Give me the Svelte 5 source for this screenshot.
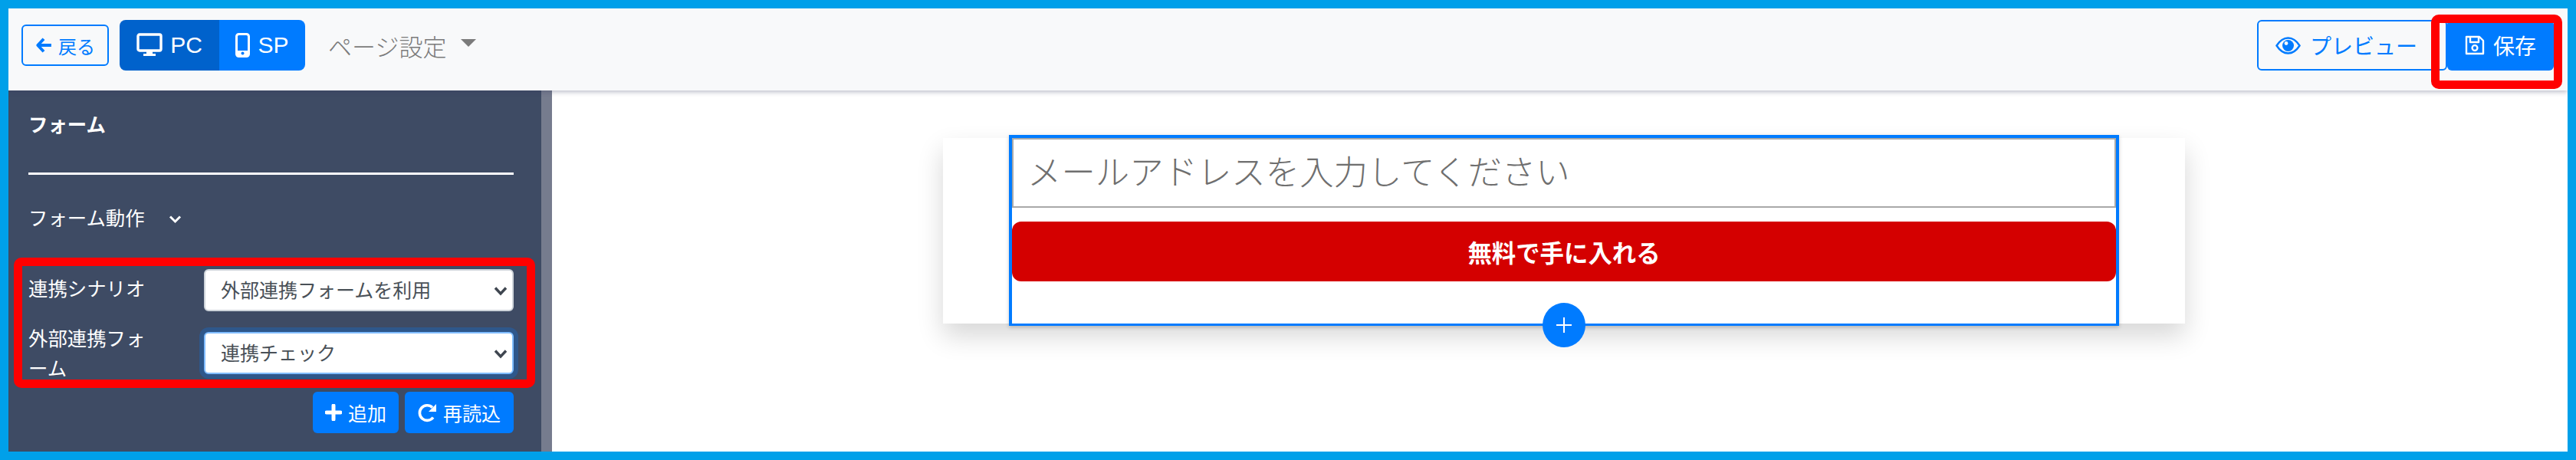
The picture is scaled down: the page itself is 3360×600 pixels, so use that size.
<script>
  let scenario = "外部連携フォームを利用";
  let linkedForm = "連携チェック";
</script>

<div class="frame">
  <header class="toolbar">
    <button class="btn back">
      <svg width="22" height="22" viewBox="0 0 20 20"><path d="M10 2.500 3 10l7 7.500M3.500 10H19" fill="none" stroke="currentColor" stroke-width="3.600" stroke-linejoin="round" /></svg>
      戻る
    </button>
    <div class="device">
      <button class="pc">
        <svg width="34" height="32" viewBox="0 0 34 32"><rect x="2" y="2" width="30" height="21" rx="2" fill="none" stroke="currentColor" stroke-width="3.400" /><path d="M13 24h8v3h4v3H9v-3h4z" fill="currentColor" /></svg>
        PC
      </button>
      <button class="sp">
        <svg width="19" height="32" viewBox="0 0 19 32"><rect x="1.500" y="1.500" width="16" height="29" rx="3" fill="none" stroke="currentColor" stroke-width="3" /><rect x="1.500" y="23" width="16" height="7.500" fill="currentColor" /><circle cx="9.500" cy="26.500" r="2" fill="#007bff" /></svg>
        SP
      </button>
    </div>
    <button class="page">ページ設定<span class="caret"></span></button>
    <div class="spacer"></div>
    <button class="btn preview">
      <svg width="33" height="23" viewBox="0 0 33 23"><path d="M1.500 11.500C6 4.500 10.500 1.500 16.500 1.500S27 4.500 31.500 11.500C27 18.500 22.500 21.500 16.500 21.500S6 18.500 1.500 11.500Z" fill="none" stroke="currentColor" stroke-width="2.400" /><circle cx="16.500" cy="11.500" r="7.500" fill="currentColor" /><circle cx="14" cy="8.500" r="2.400" fill="#f8f9fa" /></svg>
      プレビュー
    </button>
    <button class="save">
      <svg width="26" height="26" viewBox="0 0 26 26"><path d="M2 2h17l5 5v17H2zM7 2v7h11V2" fill="none" stroke="currentColor" stroke-width="2.400" stroke-linejoin="round" /><circle cx="13" cy="16.500" r="3.400" fill="none" stroke="currentColor" stroke-width="2.400" /></svg>
      保存
    </button>
  </header>

  <div class="main">
    <aside class="sidebar">
      <h2>フォーム</h2>
      <hr />
      <div class="action">
        フォーム動作
        <svg width="17" height="12" viewBox="0 0 17 12"><path d="M2 2.500 8.500 9 15 2.500" fill="none" stroke="currentColor" stroke-width="3" /></svg>
      </div>
      <div class="row first">
        <span class="label">連携シナリオ</span>
        <div class="select-wrap">
          <select bind:value={scenario}><option>外部連携フォームを利用</option></select>
          <svg width="18" height="13" viewBox="0 0 18 13"><path d="M2 2.500 9 10l7-7.500" fill="none" stroke="currentColor" stroke-width="3.400" /></svg>
        </div>
      </div>
      <div class="row">
        <span class="label">外部連携フォーム</span>
        <div class="select-wrap">
          <select class="focused" bind:value={linkedForm}><option>連携チェック</option></select>
          <svg width="18" height="13" viewBox="0 0 18 13"><path d="M2 2.500 9 10l7-7.500" fill="none" stroke="currentColor" stroke-width="3.400" /></svg>
        </div>
      </div>
      <div class="buttons">
        <button class="add">
          <svg width="22" height="22" viewBox="0 0 22 22"><path d="M11 2v18M2 11h18" fill="none" stroke="currentColor" stroke-width="5" stroke-linecap="round" /></svg>
          追加
        </button>
        <button class="reload">
          <svg width="25" height="25" viewBox="0 0 25 25"><path d="M20 18.500A9.800 9.800 0 1 1 19 5.500" fill="none" stroke="currentColor" stroke-width="3.600" /><path d="M24 1v10H14z" fill="currentColor" /></svg>
          再読込
        </button>
      </div>
    </aside>
    <div class="scrollbar"></div>

    <section class="canvas">
      <div class="card">
        <div class="block">
          <input type="text" placeholder="メールアドレスを入力してください" />
          <button class="submit">無料で手に入れる</button>
          <button class="plus" aria-label="追加">
            <svg width="22" height="22" viewBox="0 0 22 22"><path d="M11 1v20M1 11h20" fill="none" stroke="currentColor" stroke-width="2" /></svg>
          </button>
        </div>
      </div>
    </section>
  </div>

  <div class="mark mark-save"></div>
  <div class="mark mark-form"></div>
</div>

<style>
  :global(body) {
    margin: 0;
  }

  .frame {
    position: relative;
    box-sizing: border-box;
    width: 3360px;
    height: 600px;
    border: 11px solid #00a0e9;
    overflow: hidden;
    display: flex;
    flex-direction: column;
    font-family: "Liberation Sans", "Noto Sans CJK JP", sans-serif;
    font-size: 25.4px;
    background: #fff;
  }

  button {
    font-family: inherit;
    cursor: pointer;
  }

  .toolbar {
    position: relative;
    z-index: 2;
    box-sizing: border-box;
    height: 107px;
    flex: none;
    display: flex;
    align-items: center;
    padding: 15px 18px 26px 17px;
    background: #f8f9fa;
    box-shadow: 0 2px 6px rgba(60, 64, 100, 0.35);
  }

  .btn {
    display: flex;
    align-items: center;
    justify-content: center;
    box-sizing: border-box;
    border: 2px solid #007bff;
    border-radius: 6px;
    background: transparent;
    color: #007bff;
    padding: 0;
  }

  .back {
    width: 114px;
    height: 54px;
    gap: 8px;
    font-size: 24px;
    font-weight: 400;
  }

  .device {
    display: flex;
    height: 66px;
    margin-left: 14px;
    border-radius: 8px;
    overflow: hidden;
  }

  .device button {
    display: flex;
    align-items: center;
    border: 0;
    color: #fff;
    font-size: 30px;
    padding: 0;
  }

  .pc {
    width: 130px;
    background: #0062cc;
    justify-content: center;
    gap: 10px;
  }

  .sp {
    width: 112px;
    background: #007bff;
    justify-content: center;
    gap: 10px;
  }

  .page {
    display: flex;
    align-items: center;
    margin-left: 30px;
    padding: 0;
    border: 0;
    background: none;
    color: #7b7b7b;
    font-size: 31px;
    font-weight: 300;
    height: 66px;
  }

  .caret {
    width: 0;
    height: 0;
    margin: -6px 0 0 19px;
    border-left: 10px solid transparent;
    border-right: 10px solid transparent;
    border-top: 10px solid #7b7b7b;
  }

  .spacer {
    flex: 1;
  }

  .preview {
    justify-content: flex-start;
    width: 248px;
    height: 66px;
    gap: 12px;
    padding-left: 22px;
    font-size: 28px;
    font-weight: 400;
  }

  .save {
    display: flex;
    align-items: center;
    justify-content: center;
    gap: 11px;
    box-sizing: border-box;
    width: 139px;
    height: 66px;
    border: 0;
    border-radius: 6px;
    background: #007bff;
    color: #fff;
    font-size: 28px;
    font-weight: 400;
    padding: 0;
  }

  .main {
    flex: 1;
    display: flex;
    min-height: 0;
  }

  .sidebar {
    box-sizing: border-box;
    width: 695px;
    flex: none;
    padding: 26px 36px 0 26px;
    background: #3e4b64;
    color: #fff;
  }

  h2 {
    margin: 0;
    font-size: 25.4px;
    font-weight: 700;
    line-height: 39px;
  }

  hr {
    height: 3px;
    margin: 42px 0 0;
    border: 0;
    background: #fff;
  }

  .action {
    display: flex;
    align-items: center;
    gap: 31px;
    margin-top: 38px;
    line-height: 39px;
  }

  .row {
    display: flex;
    height: 55px;
    margin-top: 27px;
  }

  .row.first {
    margin-top: 46px;
  }

  .label {
    width: 229px;
    flex: none;
    line-height: 39px;
    padding-right: 60px;
    box-sizing: border-box;
  }

  .row.first .label {
    padding-top: 7px;
  }

  .row:not(.first) .label {
    margin-top: -10px;
  }

  .select-wrap {
    position: relative;
    width: 404px;
    height: 55px;
    color: #3f4650;
  }

  .select-wrap svg {
    position: absolute;
    right: 8px;
    top: 22px;
  }

  select {
    appearance: none;
    box-sizing: border-box;
    width: 100%;
    height: 55px;
    padding: 0 0 0 20px;
    border: 2px solid #ced4da;
    border-radius: 6px;
    background: #fff;
    color: #495057;
    font-family: inherit;
    font-size: 25px;
  }

  select.focused {
    border-color: #80bdff;
    box-shadow: 0 0 0 6px rgba(0, 123, 255, 0.25);
  }

  .buttons {
    display: flex;
    justify-content: flex-end;
    gap: 8px;
    margin-top: 23px;
  }

  .buttons button {
    display: flex;
    align-items: center;
    justify-content: center;
    height: 54px;
    padding: 0;
    border: 0;
    border-radius: 6px;
    background: #007bff;
    color: #fff;
    font-size: 25px;
    gap: 8px;
  }

  .add {
    width: 112px;
  }

  .reload {
    width: 142px;
  }

  .scrollbar {
    width: 14px;
    flex: none;
    background: #767c8e;
  }

  .canvas {
    flex: 1;
    display: flex;
    justify-content: center;
    align-items: flex-start;
    padding: 62px 0 0 11px;
    background: #fff;
  }

  .card {
    display: flex;
    justify-content: center;
    width: 1620px;
    height: 242px;
    background: #fff;
    box-shadow: 0 16px 32px rgba(0, 0, 0, 0.16);
  }

  .block {
    position: relative;
    box-sizing: border-box;
    width: 1448px;
    height: 249px;
    margin-top: -4px;
    border: 4px solid #007bff;
    border-bottom-width: 3px;
    background: #fff;
    box-shadow: 0 2px 5px rgba(0, 0, 0, 0.2);
  }

  input {
    display: block;
    box-sizing: border-box;
    width: 100%;
    height: 91px;
    padding: 0 18px;
    border: 2px solid #a9a9a9;
    outline: none;
    font-family: inherit;
    font-size: 44.4px;
    font-weight: 300;
  }

  input::placeholder {
    color: #6f6f6f;
    opacity: 1;
  }

  .submit {
    display: block;
    width: 100%;
    height: 78px;
    margin-top: 18px;
    padding: 0;
    border: 0;
    border-radius: 12px;
    background: #d40000;
    color: #fff;
    font-size: 31.4px;
    font-weight: 700;
  }

  .plus {
    position: absolute;
    left: 692px;
    bottom: -31px;
    display: flex;
    align-items: center;
    justify-content: center;
    width: 56px;
    height: 58px;
    padding: 0;
    border: 0;
    border-radius: 50%;
    background: #007bff;
    color: #fff;
  }

  .mark {
    position: absolute;
    z-index: 3;
    box-sizing: border-box;
    border: 11px solid #f00;
    border-radius: 10px;
    pointer-events: none;
  }

  .mark-save {
    left: 3160px;
    top: 8px;
    width: 171px;
    height: 97px;
  }

  .mark-form {
    left: 7px;
    top: 325px;
    width: 680px;
    height: 170px;
  }
</style>
